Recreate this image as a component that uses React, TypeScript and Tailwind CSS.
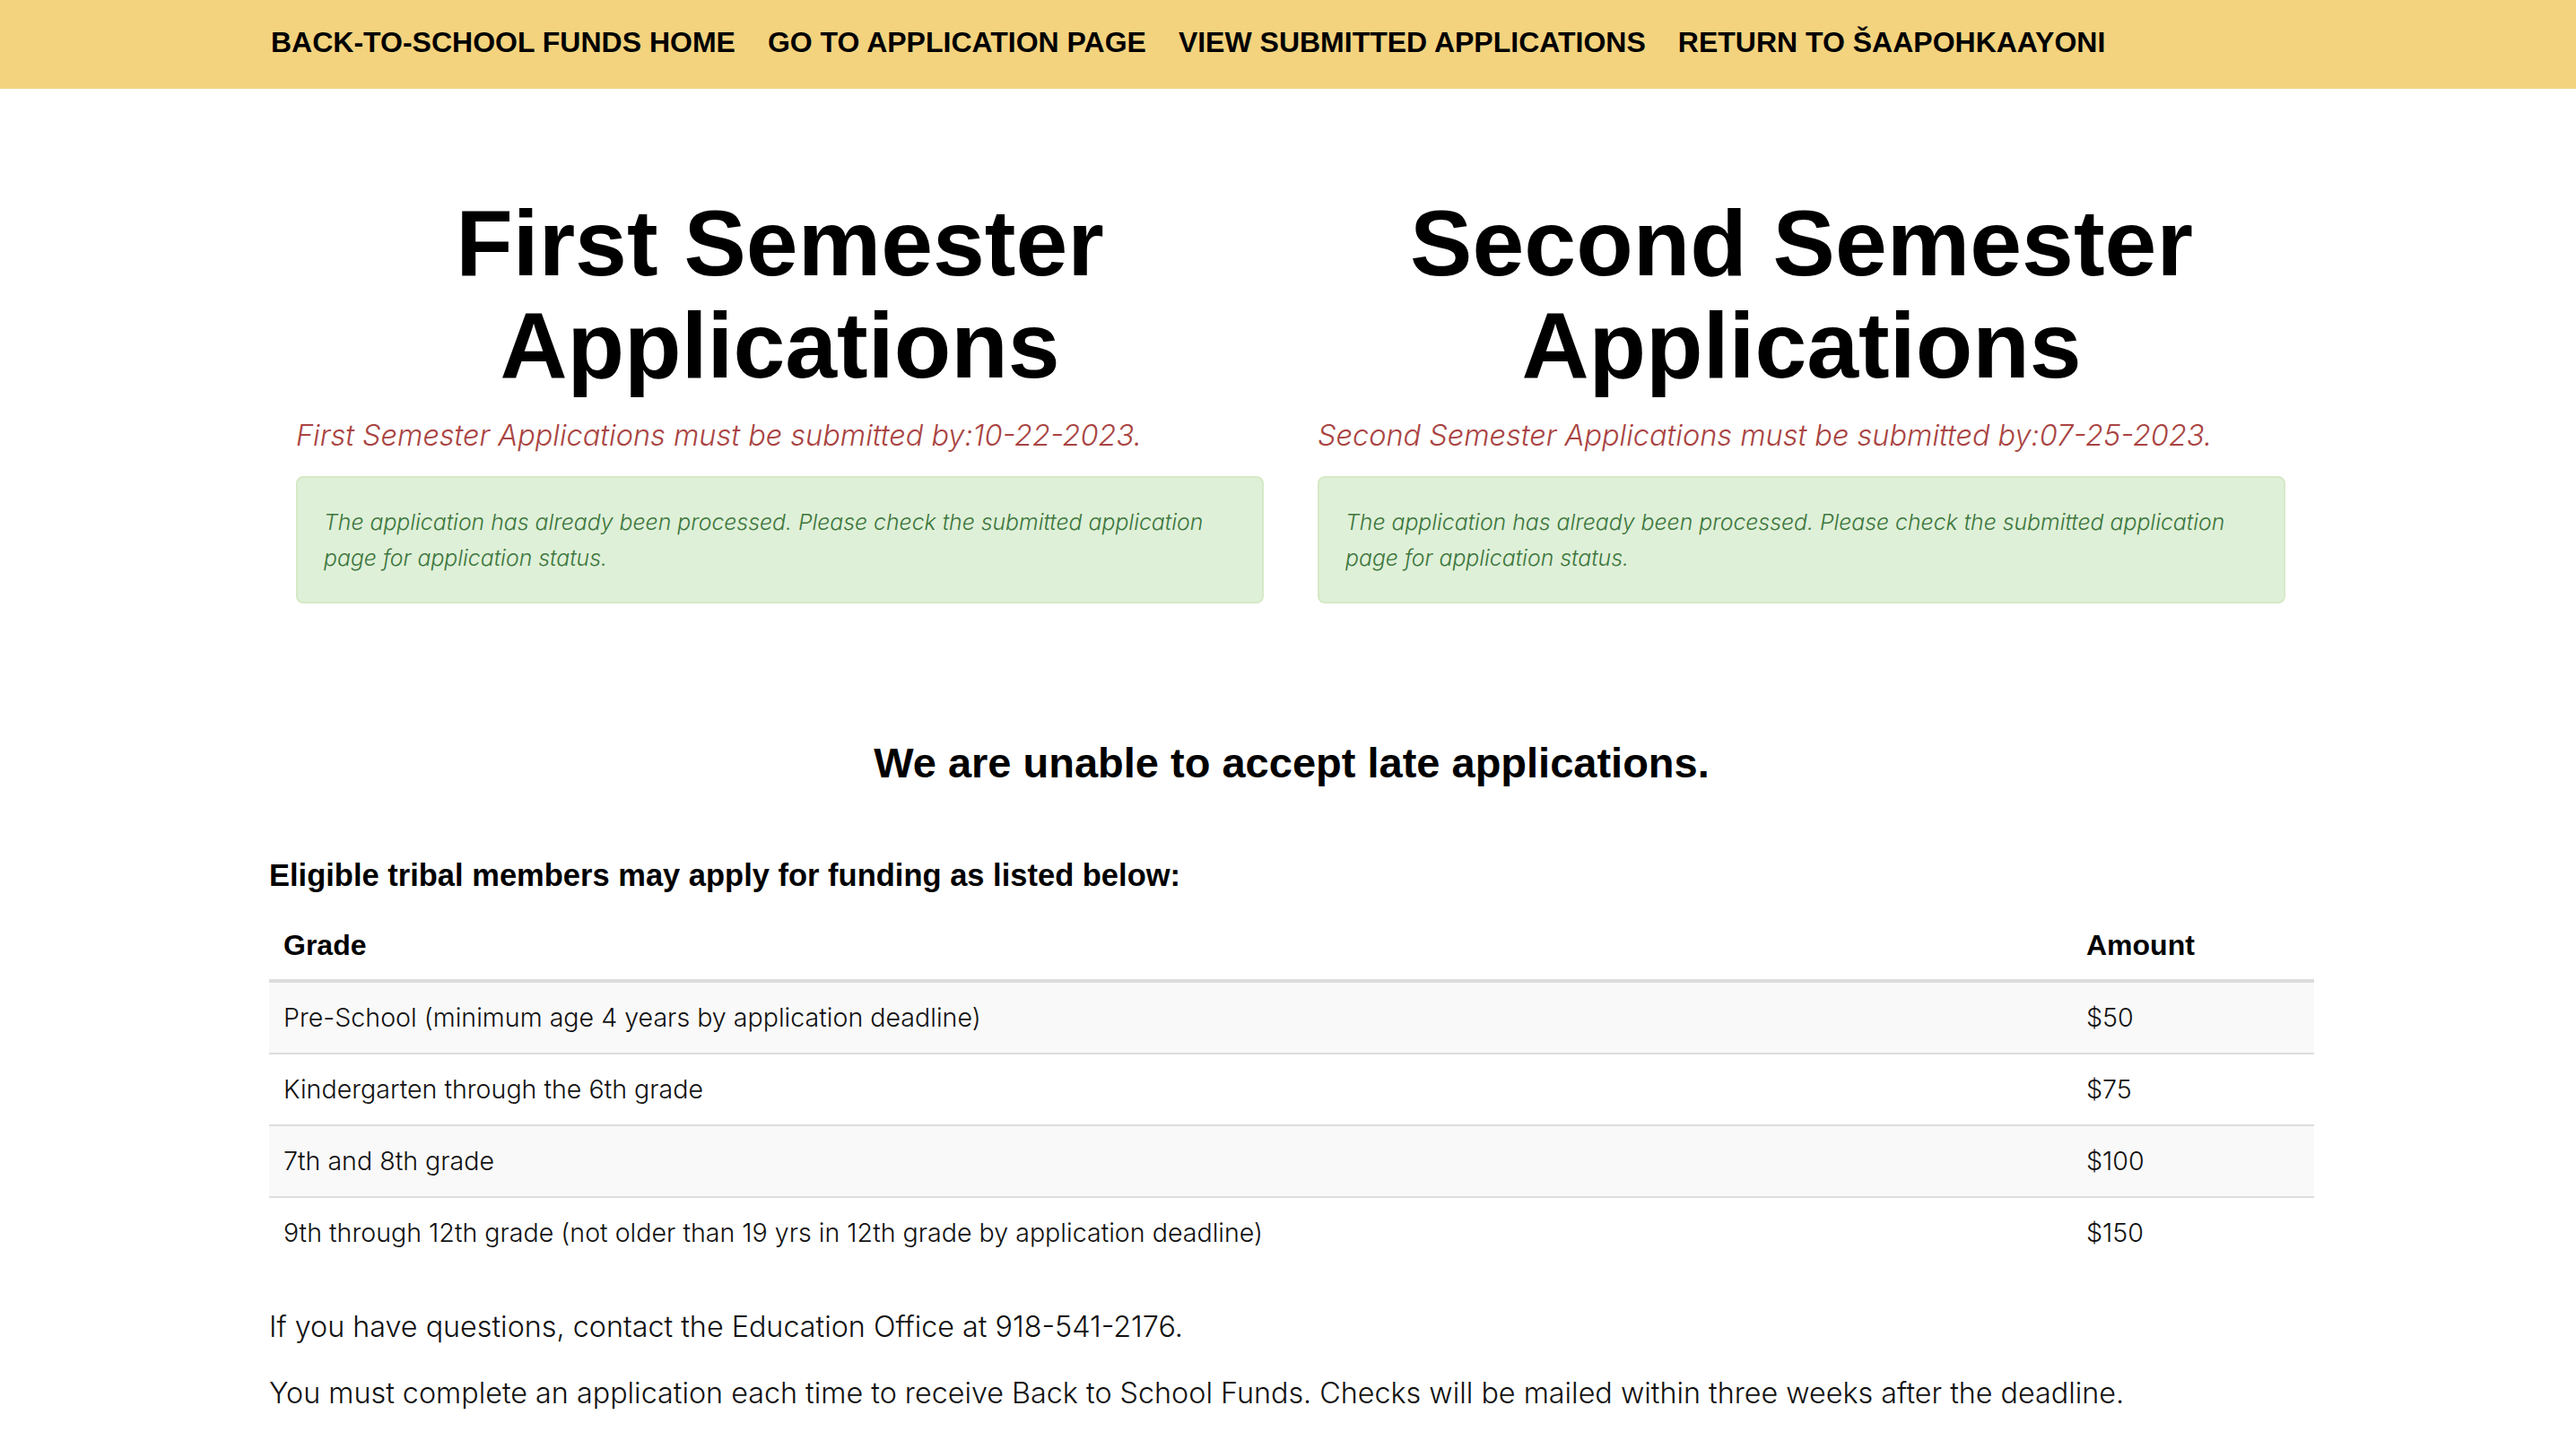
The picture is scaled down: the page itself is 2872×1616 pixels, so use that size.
const navItems = [
  "Back-to-School Funds Home",
  "Go to Application Page",
  "View Submitted Applications",
  "Return to Šaapohkaayoni",
];

const semesters = [
  {
    title: "First Semester",
    deadline: "First Semester Applications must be submitted by:10-22-2023.",
  },
  {
    title: "Second Semester",
    deadline: "Second Semester Applications must be submitted by:07-25-2023.",
  },
];

const fundingRows = [
  { grade: "Pre-School (minimum age 4 years by application deadline)", amount: "$50" },
  { grade: "Kindergarten through the 6th grade", amount: "$75" },
  { grade: "7th and 8th grade", amount: "$100" },
  {
    grade: "9th through 12th grade (not older than 19 yrs in 12th grade by application deadline)",
    amount: "$150",
  },
];

function SemesterColumn({ title, deadline }: { title: string; deadline: string }) {
  return (
    <div className="w-[1079px]">
      <h1 className="text-center font-['Liberation_Sans',Arial,sans-serif] text-[104px] font-bold leading-[114px] text-black">
        {title}
        <br />
        Applications
      </h1>
      <p className="mt-[22px] text-[32.5px] font-light italic leading-[43px] text-[#a94442]">
        {deadline}
      </p>
      <div className="mt-[24px] rounded-[8px] border-2 border-[#d6e9c6] bg-[#dff0d8] px-[29px] py-[29px] text-[24.8px] font-light italic leading-[40px] text-[#3c763d]">
        The application has already been processed. Please check the submitted application page
        for application status.
      </div>
    </div>
  );
}

export default function App() {
  return (
    <div className="min-h-screen bg-white font-['Inter','Roboto',sans-serif] text-[#111]">
      <nav className="h-[99px] bg-[#f3d37e]">
        <ul className="ml-[300px] flex h-full w-[2280px] items-center gap-[36px] pb-[6px] pl-[2px] font-['Liberation_Sans',Arial,sans-serif] text-[32px] font-bold uppercase text-black">
          {navItems.map((item) => (
            <li key={item}>
              <a href="#">{item}</a>
            </li>
          ))}
        </ul>
      </nav>

      <main className="ml-[300px] w-[2280px] pb-[40px]">
        <div className="mt-[115px] flex gap-[60px] pl-[30px]">
          {semesters.map((s) => (
            <SemesterColumn key={s.title} {...s} />
          ))}
        </div>

        <h3 className="mt-[150px] text-center font-['Liberation_Sans',Arial,sans-serif] text-[47px] font-bold leading-[56px] text-black">
          We are unable to accept late applications.
        </h3>

        <h4 className="mt-[77px] font-['Liberation_Sans',Arial,sans-serif] text-[34.5px] font-bold leading-[40px] text-black">
          Eligible tribal members may apply for funding as listed below:
        </h4>

        <table className="mt-[18px] mb-[43px] w-full border-collapse text-left">
          <thead>
            <tr className="border-b-4 border-[#ddd] font-['Liberation_Sans',Arial,sans-serif] text-[32px] font-bold leading-[45.7px] text-black">
              <th className="px-4 pt-[18px] pb-[14px]">Grade</th>
              <th className="w-[270px] px-4 pt-[18px] pb-[14px]">Amount</th>
            </tr>
          </thead>
          <tbody className="text-[28.6px] font-light leading-[46px]">
            {fundingRows.map((row, i) => (
              <tr
                key={row.amount}
                className={`border-t-2 border-[#ddd] ${i % 2 === 0 ? "bg-[#f9f9f9]" : "bg-white"}`}
              >
                <td className="p-4">{row.grade}</td>
                <td className="p-4">{row.amount}</td>
              </tr>
            ))}
          </tbody>
        </table>

        <p className="mb-[29px] text-[32.3px] font-light leading-[45.7px]">
          If you have questions, contact the Education Office at 918-541-2176.
        </p>
        <p className="text-[32.3px] font-light leading-[45.7px]">
          You must complete an application each time to receive Back to School Funds. Checks will
          be mailed within three weeks after the deadline.
        </p>
      </main>
    </div>
  );
}
